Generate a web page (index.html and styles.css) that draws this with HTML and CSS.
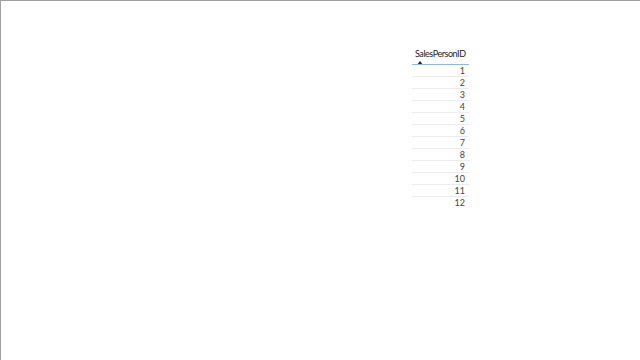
FILE: index.html
```html
<!DOCTYPE html>
<html>
<head>
<meta charset="utf-8">
<link rel="stylesheet" href="styles.css">
</head>
<body>
<div class="frame">
  <div class="table">
    <div class="head">
      <div class="title">SalesPersonID</div>
      <svg class="sort" width="6" height="4" viewBox="0 0 6 4"><path d="M0 4 L3 0 L6 4 Z" fill="#222"/></svg>
    </div>
    <div class="row">1</div>
    <div class="row">2</div>
    <div class="row">3</div>
    <div class="row">4</div>
    <div class="row">5</div>
    <div class="row">6</div>
    <div class="row">7</div>
    <div class="row">8</div>
    <div class="row">9</div>
    <div class="row">10</div>
    <div class="row">11</div>
    <div class="row last">12</div>
  </div>
</div>
</body>
</html>
```
FILE: styles.css
```css
html, body {
  margin: 0;
  padding: 0;
  background: #fff;
}
.frame {
  width: 640px;
  height: 360px;
  box-sizing: border-box;
  border-top: 1px solid #a0a0a0;
  border-left: 1px solid #a0a0a0;
  padding: 45px 0 0 411px;
  font-family: Lato, "Noto Sans", sans-serif;
}
.table {
  width: 57px;
  font-size: 9px;
  color: #333;
}
.head {
  border-bottom: 1px solid #8fb8e0;
  display: flex;
  flex-direction: column;
  padding-left: 3px;
  box-sizing: border-box;
  height: 19px;
}
.title {
  line-height: 12px;
  padding-top: 2px;
  color: #222;
  letter-spacing: -0.45px;
}
.sort {
  margin-left: 2px;
  margin-top: 1px;
}
.row {
  height: 12px;
  line-height: 12px;
  box-sizing: border-box;
  border-bottom: 1px solid #ececec;
  text-align: right;
  padding-right: 4px;
  color: #444;
}
.row.last {
  border-bottom: none;
}
```
